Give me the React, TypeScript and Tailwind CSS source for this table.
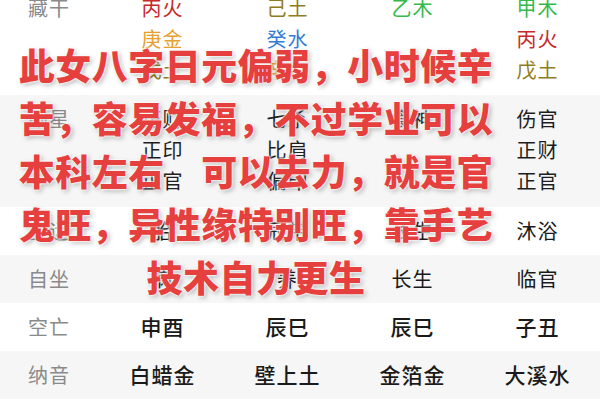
const FIRE = "text-[#c62a2a]";
const METAL = "text-[#e6a12e]";
const EARTH = "text-[#8f7c1c]";
const WATER = "text-[#2f7bd6]";
const WOOD = "text-[#35b94a]";

type Cell = { t: string; c?: string };

const HIDDEN: Cell[][] = [
  [{ t: "丙火", c: FIRE }, { t: "庚金", c: METAL }, { t: "戊土", c: EARTH }],
  [{ t: "己土", c: EARTH }, { t: "癸水", c: WATER }, { t: "辛金", c: METAL }],
  [{ t: "乙木", c: WOOD }],
  [{ t: "甲木", c: WOOD }, { t: "丙火", c: FIRE }, { t: "戊土", c: EARTH }],
];

const SUB: string[][] = [
  ["正财", "正印", "正官"],
  ["七杀", "比肩", "偏印"],
  ["食神"],
  ["伤官", "正财", "正官"],
];

const SIMPLE_ROWS: { label: string; values: string[]; bold?: boolean; bg: string }[] = [
  { label: "星运", values: ["胎", "冠带", "长生", "沐浴"], bg: "bg-white" },
  { label: "自坐", values: ["病", "养", "长生", "临官"], bg: "bg-[#f6f6f6]" },
  { label: "空亡", values: ["申酉", "辰巳", "辰巳", "子丑"], bold: true, bg: "bg-white" },
  { label: "纳音", values: ["白蜡金", "壁上土", "金箔金", "大溪水"], bold: true, bg: "bg-[#f6f6f6]" },
];

const OVERLAY = [
  "此女八字日元偏弱，小时候辛",
  "苦，容易发福，不过学业可以",
  "本科左右\u3000可以去力，就是官",
  "鬼旺，异性缘特别旺，靠手艺",
  "技术自力更生",
];

const grid = "grid grid-cols-[100px_125px_125px_125px_125px]";

export default function App() {
  return (
    <div className="relative w-[600px] h-[400px] overflow-hidden bg-white font-['Noto_Sans_CJK_SC','Noto_Sans',sans-serif]">
      <div className="-mt-[24px]">
        {/* 藏干 */}
        <div className={`${grid} bg-white pt-[16px] pb-[10px] text-[20px] leading-[31px] tracking-[1px]`}>
          <div className="pl-[28px] text-[#8a8a8a]">藏干</div>
          {HIDDEN.map((col, i) => (
            <div key={i} className="flex flex-col items-center">
              {col.map((c, j) => (
                <span key={j} className={c.c}>{c.t}</span>
              ))}
            </div>
          ))}
        </div>

        {/* 副星 */}
        <div className={`${grid} bg-[#f6f6f6] pt-[8px] pb-[11px] text-[20px] leading-[31px] tracking-[1px]`}>
          <div className="pl-[28px] text-[#8a8a8a]">副星</div>
          {SUB.map((col, i) => (
            <div key={i} className="flex flex-col items-center text-[#1e1e1e]">
              {col.map((s, j) => (
                <span key={j}>{s}</span>
              ))}
            </div>
          ))}
        </div>

        {SIMPLE_ROWS.map((r) => (
          <div key={r.label} className={`${grid} ${r.bg} h-[48px] items-center text-[20px] tracking-[1px]`}>
            <div className="pl-[28px] text-[#8a8a8a]">{r.label}</div>
            {r.values.map((v, i) => (
              <div key={i} className={`text-center text-[#1a1a1a] ${r.bold ? "font-medium text-[21px]" : ""}`}>
                {v}
              </div>
            ))}
          </div>
        ))}
      </div>

      {/* overlay caption */}
      <div className="absolute left-[17px] top-[38px] w-[478px] text-center text-[36px] leading-[53px] tracking-[0.5px] font-black text-[#e6403e] [text-shadow:0_0_2px_#fff,0_0_2px_#fff,0_0_3px_#fff,2px_2px_5px_rgba(0,0,0,0.3)]">
        {OVERLAY.map((l, i) => (
          <div key={i} className="whitespace-nowrap">{l}</div>
        ))}
      </div>
    </div>
  );
}
